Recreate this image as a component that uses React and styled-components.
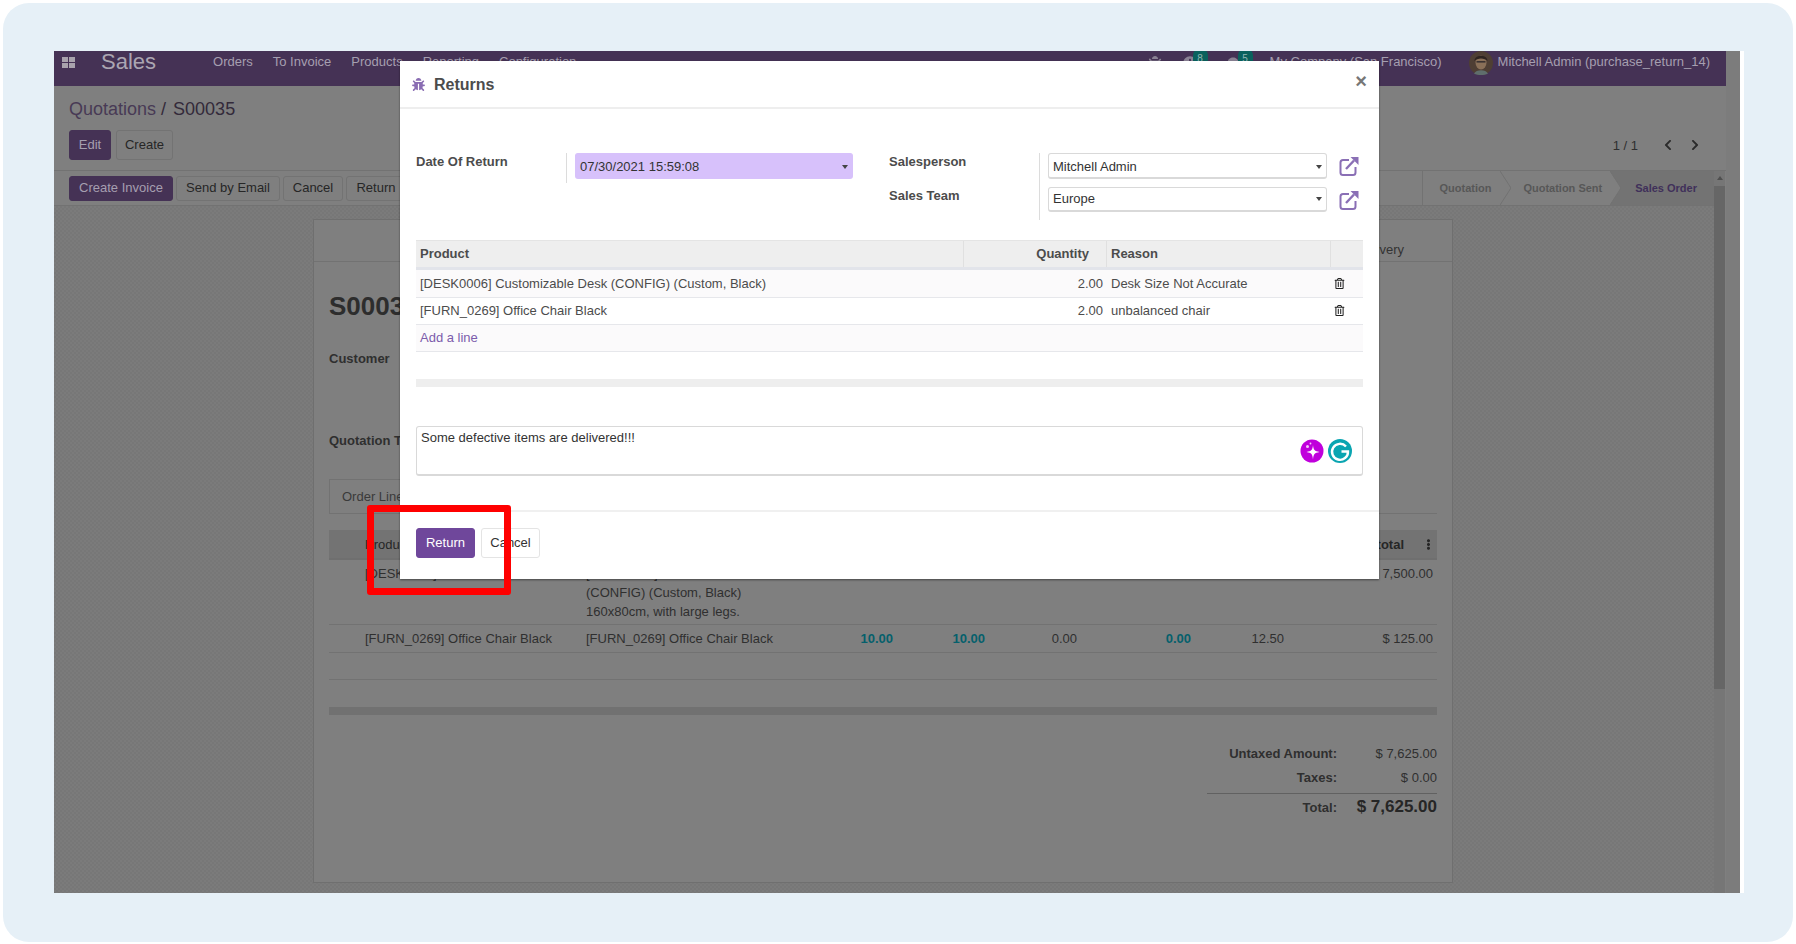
import React from "react";
import styled, { createGlobalStyle } from "styled-components";
import { FaBug, FaChevronLeft, FaChevronRight, FaClock, FaComments, FaEllipsisV, FaRegTrashAlt } from "react-icons/fa";

const GlobalStyle = createGlobalStyle`
  html, body {
    margin: 0;
    padding: 0;
    background: #ffffff;
    font-family: "Liberation Sans", Arial, sans-serif;
    font-size: 13px;
    color: #4c4c4c;
  }
  * {
    box-sizing: border-box;
  }
`;

const Page = styled.div`
  width: 1796px;
  height: 944px;
  padding: 3px;
  overflow: hidden;
`;

const Frame = styled.div`
  height: 939px;
  padding: 48px 49px 0 51px;
  background: #e6f0f7;
  border-radius: 26px;
`;

const Shot = styled.div`
  position: relative;
  width: 1690px;
  height: 842px;
  padding-right: 4px;
  background: #ffffff;
  overflow: hidden;
`;

const Screen = styled.div`
  display: flex;
  height: 100%;
  background: #7f7f7f;
`;

const Main = styled.div`
  display: flex;
  flex-direction: column;
  width: 1672px;
`;

const NavBar = styled.div`
  display: flex;
  flex: none;
  height: 35px;
  padding: 0 16px 0 8px;
  background: #453255;
  color: #a59fb0;
`;

const NavRow = styled.div`
  display: flex;
  align-items: center;
  height: 21px;
  margin-left: ${(p) => (p.$right ? "auto" : "0")};
`;

const AppTitle = styled.span`
  margin: 0 57px 0 25px;
  font-size: 22px;
  color: #aba6b2;
`;

const NavLink = styled.span`
  margin-right: 20px;
`;

const NavIcon = styled.span`
  position: relative;
  display: flex;
  margin-top: 3px;
  margin-right: ${(p) => p.$mr}px;
  font-size: 14px;
  color: #8a8294;
`;

const Badge = styled.span`
  position: absolute;
  left: 10px;
  top: -8px;
  display: flex;
  align-items: center;
  justify-content: center;
  width: 15px;
  height: 20px;
  border-radius: 8px;
  background: #0a615d;
  color: #8fb6b3;
  font-size: 10px;
`;

const AvatarWrap = styled.span`
  display: flex;
  margin: 0 5px 0 27px;
  height: 24px;
  align-self: flex-start;
`;

const ControlPanel = styled.div`
  flex: none;
  height: 85px;
  padding: 12px 12px 0 15px;
  border-bottom: 1px solid #727272;
`;

const Breadcrumb = styled.div`
  font-size: 18px;
  line-height: 22px;
  color: #332a3a;
`;

const BreadcrumbLink = styled.span`
  color: #483a55;
`;

const CurrentCrumb = styled.span`
  margin-left: 2px;
`;

const ActionsRow = styled.div`
  display: flex;
  align-items: center;
  gap: 5px;
  margin-top: 10px;
`;

const Button = styled.span`
  display: inline-flex;
  align-items: center;
  justify-content: center;
  height: ${(p) => p.$h || 30}px;
  width: ${(p) => p.$w}px;
  padding-bottom: 1px;
  border: 1px solid ${(p) => (p.$primary ? "#453255" : "#737373")};
  border-radius: 3px;
  background: ${(p) => (p.$primary ? "#453255" : "#7f7f7f")};
  color: ${(p) => (p.$primary ? "#a59fb0" : "#262626")};
`;

const Pager = styled.div`
  display: flex;
  align-items: center;
  margin-left: auto;
  padding-right: 13px;
  color: #2f2f2f;
  font-size: 13px;
`;

const PagerCount = styled.span`
  margin-right: 24px;
`;

const PagerArrow = styled.span`
  display: flex;
  margin-left: ${(p) => p.$ml || 0}px;
  font-size: 12px;
  color: #2b2b2b;
`;

const ContentRow = styled.div`
  display: flex;
  flex: 1;
  min-height: 0;
`;

const ContentColumn = styled.div`
  display: flex;
  flex-direction: column;
  width: 1660px;
`;

const ScrollBar = styled.div`
  display: flex;
  flex-direction: column;
  align-items: center;
  width: 11px;
  background: #767676;
`;

const ScrollArrow = styled.span`
  margin-top: 5px;
  width: 0;
  height: 0;
  border-left: 3px solid transparent;
  border-right: 3px solid transparent;
  border-bottom: 4px solid #4f4f4f;
`;

const ScrollThumb = styled.span`
  width: 11px;
  height: 503px;
  margin-top: 6px;
  background: #666666;
`;

const StatusBar = styled.div`
  display: flex;
  flex: none;
  align-items: center;
  gap: 3px;
  height: 35px;
  padding-left: 15px;
  border-bottom: 1px solid #727272;
`;

const Steps = styled.div`
  display: flex;
  align-self: stretch;
  margin-left: auto;
  border-left: 1px solid #727272;
  font-size: 11px;
  font-weight: bold;
  color: #575757;
`;

const Step = styled.span`
  display: flex;
  align-items: center;
  padding: ${(p) => p.$pad};
  background: ${(p) => (p.$active ? "#737373" : "transparent")};
  color: ${(p) => (p.$active ? "#40305a" : "#575757")};
`;

const Canvas = styled.div`
  flex: 1;
  min-height: 0;
  padding: 13px 0 10px 259px;
  background: repeating-conic-gradient(#777777 0 25%, #7b7b7b 0 50%) 0 0 / 4px 4px;
`;

const Sheet = styled.div`
  width: 1140px;
  height: 100%;
  padding: 0 15px;
  border: 1px solid #6f6f6f;
  background: #7f7f7f;
`;

const ButtonBox = styled.div`
  display: flex;
  align-items: flex-end;
  justify-content: flex-end;
  height: 42px;
  margin: 0 -15px;
  padding: 0 48px 4px 0;
  border-bottom: 1px solid #727272;
  color: #333333;
`;

const OrderName = styled.h1`
  margin: 29px 0 0;
  font-size: 26px;
  line-height: 30px;
  color: #2d2d2d;
`;

const SheetLabel = styled.div`
  margin-top: ${(p) => p.$mt}px;
  line-height: 20px;
  font-weight: bold;
  color: #2f2f2f;
`;

const Tabs = styled.div`
  margin-top: 28px;
  height: 35px;
  border-bottom: 1px solid #727272;
`;

const Tab = styled.span`
  display: inline-flex;
  align-items: center;
  height: 34px;
  padding: 0 12px;
  border: 1px solid #727272;
  border-bottom: 0;
  color: #3a3a3a;
`;

const lineColumns = "32px 221px 240px 75px 92px 92px 114px 93px 149px";

const LineHead = styled.div`
  display: grid;
  grid-template-columns: ${lineColumns};
  height: 30px;
  margin-top: 16px;
  align-items: center;
  background: #737373;
  border-bottom: 2px solid #6f6f6f;
  color: #262626;
  font-weight: bold;
`;

const LineRow = styled.div`
  display: grid;
  grid-template-columns: ${lineColumns};
  height: ${(p) => p.$h}px;
  padding-top: 4px;
  line-height: 19px;
  border-bottom: ${(p) => (p.$plain ? "0" : "1px solid #727272")};
  color: #2f2f2f;
`;

const LineCell = styled.div`
  padding: 0 4px;
  text-align: ${(p) => (p.$right ? "right" : "left")};
  font-weight: ${(p) => (p.$teal ? "bold" : "normal")};
  color: ${(p) => (p.$teal ? "#05606c" : "inherit")};
`;

const SubtotalCell = styled.div`
  display: flex;
  align-items: center;
  justify-content: flex-end;
  gap: 19px;
  padding: 0 3px 0 4px;
`;

const GreyBar = styled.div`
  height: 8px;
  background: ${(p) => p.$bg};
`;

const Totals = styled.div`
  display: grid;
  grid-template-columns: 130px 100px;
  width: 230px;
  margin: 27px 0 0 auto;
  color: #2f2f2f;
`;

const TotalLabel = styled.div`
  height: 24px;
  line-height: 24px;
  text-align: right;
  font-weight: bold;
`;

const TotalValue = styled.div`
  height: 24px;
  line-height: 24px;
  text-align: right;
`;

const GrandLabel = styled(TotalLabel)`
  margin-top: 3px;
  padding-top: 2px;
  border-top: 1px solid #616161;
  height: 27px;
`;

const GrandValue = styled(TotalValue)`
  margin-top: 3px;
  padding-top: 1px;
  border-top: 1px solid #616161;
  height: 27px;
  font-size: 17px;
  font-weight: bold;
  color: #262626;
`;

const RightGutter = styled.div`
  width: 14px;
  background: #7c7c7c;
`;

const Modal = styled.div`
  position: absolute;
  left: 346px;
  top: 10px;
  display: flex;
  flex-direction: column;
  width: 979px;
  height: 518px;
  background: #ffffff;
  box-shadow: 0 1px 2px rgba(0, 0, 0, 0.45);
`;

const ModalHead = styled.div`
  display: flex;
  flex: none;
  align-items: center;
  height: 48px;
  padding: 1px 12px 0 12px;
  border-bottom: 2px solid #eeeeee;
`;

const ModalTitle = styled.div`
  margin-left: 9px;
  font-size: 16px;
  font-weight: bold;
  color: #4c4c4c;
`;

const CloseMark = styled.span`
  margin-left: auto;
  margin-top: -6px;
  font-size: 20px;
  font-weight: bold;
  color: #777777;
`;

const ModalBody = styled.div`
  flex: 1;
  padding: 44px 16px 0;
`;

const FieldGrid = styled.div`
  display: flex;
  align-items: flex-start;
`;

const FieldGroup = styled.div`
  display: flex;
  width: ${(p) => p.$w}px;
`;

const FieldLabels = styled.div`
  display: flex;
  flex-direction: column;
  gap: 16px;
  width: 150px;
`;

const FieldLabel = styled.div`
  line-height: 18px;
  font-weight: bold;
  color: #4c4c4c;
`;

const FieldValues = styled.div`
  display: flex;
  flex-direction: column;
  gap: 8px;
  padding: 0 0 ${(p) => p.$pb}px 8px;
  border-left: 1px solid #dcdcdc;
`;

const FieldLine = styled.div`
  display: flex;
  align-items: center;
  gap: 12px;
`;

const SelectBox = styled.div`
  display: flex;
  align-items: center;
  justify-content: space-between;
  width: ${(p) => p.$w}px;
  height: ${(p) => p.$h || 26}px;
  padding: ${(p) => (p.$h ? "0 4px 1px" : "2px 4px 0")};
  border: 1px solid ${(p) => (p.$required ? "#d7c1fb" : "#d9d9d9")};
  border-bottom-width: 2px;
  border-radius: 3px;
  background: ${(p) => (p.$required ? "#d7c1fb" : "#ffffff")};
  color: #333333;
`;

const Caret = styled.span`
  width: 0;
  height: 0;
  border-left: 3px solid transparent;
  border-right: 3px solid transparent;
  border-top: 4px solid #444444;
`;

const lineGrid = "548px 143px 224px 32px";

const ReturnHead = styled.div`
  display: grid;
  grid-template-columns: ${lineGrid};
  height: 30px;
  margin-top: 20px;
  background: #eeeeee;
  border-top: 1px solid #e4e4e4;
  border-bottom: 3px solid #e2e4ea;
  font-weight: bold;
  color: #4c4c4c;
`;

const ReturnHeadCell = styled.div`
  display: flex;
  align-items: center;
  justify-content: ${(p) => (p.$right ? "flex-end" : "flex-start")};
  padding: ${(p) => (p.$right ? "0 17px 1px 0" : "0 4px 1px")};
  border-right: 1px solid ${(p) => (p.$last ? "transparent" : "#e0e0e0")};
`;

const ReturnRow = styled.div`
  display: grid;
  grid-template-columns: ${lineGrid};
  align-items: center;
  height: ${(p) => p.$h || 27}px;
  padding-bottom: 1px;
  background: ${(p) => (p.$striped ? "#fbfafb" : "#ffffff")};
  border-bottom: 1px solid #e6e7eb;
  color: #4c4c4c;
`;

const ReturnCell = styled.div`
  display: flex;
  justify-content: ${(p) => (p.$right ? "flex-end" : "flex-start")};
  padding: 0 4px;
`;

const TrashCell = styled(ReturnCell)`
  padding: 0 3px;
  color: #222222;
`;

const AddLine = styled.span`
  padding-left: 4px;
  color: #7c5cab;
`;

const LightBar = styled(GreyBar)`
  margin-top: 27px;
`;

const Notes = styled.div`
  position: relative;
  height: 50px;
  margin-top: 39px;
  padding: 3px 4px;
  border: 1px solid #d9d9d9;
  border-bottom-width: 2px;
  border-radius: 3px;
  color: #333333;
`;

const NoteTools = styled.div`
  position: absolute;
  right: 10px;
  bottom: 11px;
  display: flex;
  gap: 4px;
`;

const ModalFoot = styled.div`
  display: flex;
  flex: none;
  gap: 6px;
  height: 69px;
  padding: 16px 16px 0;
  border-top: 2px solid #f0f0f0;
`;

const FootButton = styled.span`
  display: inline-flex;
  align-items: center;
  justify-content: center;
  width: 59px;
  height: 30px;
  padding-bottom: 1px;
  border: 1px solid ${(p) => (p.$primary ? "#6f479b" : "#e4e4e4")};
  border-radius: 3px;
  background: ${(p) => (p.$primary ? "#6f479b" : "#ffffff")};
  color: ${(p) => (p.$primary ? "#ffffff" : "#333333")};
`;

const Highlight = styled.div`
  position: absolute;
  left: 313px;
  top: 454px;
  width: 144px;
  height: 90px;
  border: 7px solid #ff0000;
  border-radius: 3px;
`;

function AppsGrid() {
  return (
    <svg width="14" height="22" viewBox="0 0 14 22">
      <g fill="#a9a3ad">
        <rect x="0" y="6" width="6" height="5" />
        <rect x="7" y="6" width="6" height="5" />
        <rect x="0" y="12" width="6" height="5" />
        <rect x="7" y="12" width="6" height="5" />
      </g>
    </svg>
  );
}

function Avatar() {
  return (
    <svg width="24" height="24" viewBox="0 0 24 24">
      <circle cx="12" cy="12" r="12" fill="#4f3f34" />
      <ellipse cx="12" cy="11.5" rx="5.5" ry="7" fill="#8a7058" />
      <path d="M5.5 10C5.5 3 18.5 3 18.5 10C16 6.5 8 6.5 5.5 10Z" fill="#2e2420" />
      <rect x="7.5" y="10" width="9" height="1.6" fill="#3a3230" />
      <path d="M5 22.5C7 18 17 18 19 22.5C15 24.5 9 24.5 5 22.5Z" fill="#5f6e6c" />
    </svg>
  );
}

function ExternalLink() {
  return (
    <svg width="20" height="20" viewBox="0 0 20 20" fill="none">
      <path
        d="M10 4H4a2.5 2.5 0 0 0-2.5 2.5v10A2.5 2.5 0 0 0 4 19h10a2.5 2.5 0 0 0 2.5-2.5V11"
        stroke="#8a6fb5"
        strokeWidth="2"
      />
      <path d="M7 13L15 4.5" stroke="#8a6fb5" strokeWidth="2.4" />
      <path d="M11.5 1H19.5V9Z" fill="#8a6fb5" />
    </svg>
  );
}

function SparkleBadge() {
  return (
    <svg width="24" height="24" viewBox="0 0 24 24">
      <circle cx="12" cy="12" r="11.5" fill="#c000dc" />
      <path d="M13 6C13.5 11 14.5 12 19.5 13C14.5 14 13.5 15 13 20.5C12.5 15 11.5 14 6.5 13C11.5 12 12.5 11 13 6Z" fill="#ffffff" />
      <circle cx="7.5" cy="7.5" r="1.5" fill="#f4c8fa" />
      <circle cx="10.5" cy="4.5" r="0.9" fill="#f4c8fa" />
    </svg>
  );
}

function GrammarlyBadge() {
  return (
    <svg width="24" height="24" viewBox="0 0 24 24" fill="none">
      <circle cx="12" cy="12" r="12" fill="#0aa5b1" />
      <path d="M18 7.5A8 8 0 1 0 20 12.5H13.5" stroke="#ffffff" strokeWidth="2.4" />
    </svg>
  );
}

function StepChevron({ filled }) {
  return (
    <svg width="11" height="34" viewBox="0 0 11 34" style={{ flex: "none", background: filled ? "#737373" : "transparent" }}>
      <path d="M0 0L11 17L0 34" fill="#7f7f7f" stroke="#727272" />
    </svg>
  );
}

const orderLines = [
  {
    code: "[FURN_0269] Office Chair Black",
    desc: ["[FURN_0269] Office Chair Black"],
    price: "12.50",
    total: "$ 125.00",
  },
];

export default function App() {
  return (
    <Page>
      <GlobalStyle />
      <Frame>
        <Shot>
          <Screen>
            <Main>
              <NavBar>
                <NavRow>
                  <AppsGrid />
                  <AppTitle>Sales</AppTitle>
                  <NavLink>Orders</NavLink>
                  <NavLink>To Invoice</NavLink>
                  <NavLink>Products</NavLink>
                  <NavLink>Reporting</NavLink>
                  <NavLink>Configuration</NavLink>
                </NavRow>
                <NavRow $right>
                  <NavIcon $mr={21}>
                    <FaBug />
                  </NavIcon>
                  <NavIcon $mr={31}>
                    <FaClock />
                    <Badge>8</Badge>
                  </NavIcon>
                  <NavIcon $mr={28}>
                    <FaComments />
                    <Badge>5</Badge>
                  </NavIcon>
                  <span>My Company (San Francisco)</span>
                  <AvatarWrap>
                    <Avatar />
                  </AvatarWrap>
                  <span>Mitchell Admin (purchase_return_14)</span>
                </NavRow>
              </NavBar>

              <ControlPanel>
                <Breadcrumb>
                  <BreadcrumbLink>Quotations</BreadcrumbLink> / <CurrentCrumb>S00035</CurrentCrumb>
                </Breadcrumb>
                <ActionsRow>
                  <Button $primary $w={42}>Edit</Button>
                  <Button $w={57}>Create</Button>
                  <Pager>
                    <PagerCount>1 / 1</PagerCount>
                    <PagerArrow><FaChevronLeft /></PagerArrow>
                    <PagerArrow $ml={15}><FaChevronRight /></PagerArrow>
                  </Pager>
                </ActionsRow>
              </ControlPanel>

              <ContentRow>
                <ContentColumn>
                  <StatusBar>
                    <Button $primary $h={25} $w={104}>Create Invoice</Button>
                    <Button $h={25} $w={104}>Send by Email</Button>
                    <Button $h={25} $w={60}>Cancel</Button>
                    <Button $h={25} $w={60}>Return</Button>
                    <Steps>
                      <Step $pad="0 9px 0 16px">Quotation</Step>
                      <StepChevron />
                      <Step $pad="0 8px 0 12px">Quotation Sent</Step>
                      <StepChevron filled />
                      <Step $active $pad="0 17px 0 14px">Sales Order</Step>
                    </Steps>
                  </StatusBar>

                  <Canvas>
                    <Sheet>
                      <ButtonBox>Delivery</ButtonBox>
                      <OrderName>S00035</OrderName>
                      <SheetLabel $mt={28}>Customer</SheetLabel>
                      <SheetLabel $mt={62}>Quotation Template</SheetLabel>
                      <Tabs>
                        <Tab>Order Lines</Tab>
                      </Tabs>
                      <LineHead>
                        <LineCell />
                        <LineCell>Product</LineCell>
                        <LineCell>Description</LineCell>
                        <LineCell $right>Ordered</LineCell>
                        <LineCell $right>Delivered</LineCell>
                        <LineCell $right>Invoiced</LineCell>
                        <LineCell $right>Returned</LineCell>
                        <LineCell $right>Unit Price</LineCell>
                        <SubtotalCell>
                          Subtotal
                          <FaEllipsisV size={11} />
                        </SubtotalCell>
                      </LineHead>
                      <LineRow $h={65}>
                        <LineCell />
                        <LineCell>[DESK0006] Customizable Desk</LineCell>
                        <LineCell>
                          [DESK0006] Customizable Desk
                          <br />
                          (CONFIG) (Custom, Black)
                          <br />
                          160x80cm, with large legs.
                        </LineCell>
                        <LineCell $right $teal>10.00</LineCell>
                        <LineCell $right $teal>10.00</LineCell>
                        <LineCell $right>0.00</LineCell>
                        <LineCell $right $teal>0.00</LineCell>
                        <LineCell $right>750.00</LineCell>
                        <LineCell $right>$ 7,500.00</LineCell>
                      </LineRow>
                      {orderLines.map((line) => (
                        <LineRow key={line.code} $h={28}>
                          <LineCell />
                          <LineCell>{line.code}</LineCell>
                          <LineCell>{line.desc}</LineCell>
                          <LineCell $right $teal>10.00</LineCell>
                          <LineCell $right $teal>10.00</LineCell>
                          <LineCell $right>0.00</LineCell>
                          <LineCell $right $teal>0.00</LineCell>
                          <LineCell $right>{line.price}</LineCell>
                          <LineCell $right>{line.total}</LineCell>
                        </LineRow>
                      ))}
                      <LineRow $h={27} />
                      <LineRow $h={27} $plain />
                      <GreyBar $bg="#717171" />
                      <Totals>
                        <TotalLabel>Untaxed Amount:</TotalLabel>
                        <TotalValue>$ 7,625.00</TotalValue>
                        <TotalLabel>Taxes:</TotalLabel>
                        <TotalValue>$ 0.00</TotalValue>
                        <GrandLabel>Total:</GrandLabel>
                        <GrandValue>$ 7,625.00</GrandValue>
                      </Totals>
                    </Sheet>
                  </Canvas>
                </ContentColumn>
                <ScrollBar>
                  <ScrollArrow />
                  <ScrollThumb />
                </ScrollBar>
              </ContentRow>
            </Main>
            <RightGutter />
          </Screen>

          <Modal>
            <ModalHead>
              <FaBug color="#8a6db3" size={13} />
              <ModalTitle>Returns</ModalTitle>
              <CloseMark>×</CloseMark>
            </ModalHead>
            <ModalBody>
              <FieldGrid>
                <FieldGroup $w={473}>
                  <FieldLabels>
                    <FieldLabel>Date Of Return</FieldLabel>
                  </FieldLabels>
                  <FieldValues $pb={4}>
                    <SelectBox $required $w={278}>
                      07/30/2021 15:59:08
                      <Caret />
                    </SelectBox>
                  </FieldValues>
                </FieldGroup>
                <FieldGroup $w={474}>
                  <FieldLabels>
                    <FieldLabel>Salesperson</FieldLabel>
                    <FieldLabel>Sales Team</FieldLabel>
                  </FieldLabels>
                  <FieldValues $pb={8}>
                    <FieldLine>
                      <SelectBox $w={279}>
                        Mitchell Admin
                        <Caret />
                      </SelectBox>
                      <ExternalLink />
                    </FieldLine>
                    <FieldLine>
                      <SelectBox $w={279} $h={25}>
                        Europe
                        <Caret />
                      </SelectBox>
                      <ExternalLink />
                    </FieldLine>
                  </FieldValues>
                </FieldGroup>
              </FieldGrid>

              <ReturnHead>
                <ReturnHeadCell>Product</ReturnHeadCell>
                <ReturnHeadCell $right>Quantity</ReturnHeadCell>
                <ReturnHeadCell>Reason</ReturnHeadCell>
                <ReturnHeadCell $last />
              </ReturnHead>
              <ReturnRow $h={28} $striped>
                <ReturnCell>[DESK0006] Customizable Desk (CONFIG) (Custom, Black)</ReturnCell>
                <ReturnCell $right>2.00</ReturnCell>
                <ReturnCell>Desk Size Not Accurate</ReturnCell>
                <TrashCell><FaRegTrashAlt size={11} /></TrashCell>
              </ReturnRow>
              <ReturnRow>
                <ReturnCell>[FURN_0269] Office Chair Black</ReturnCell>
                <ReturnCell $right>2.00</ReturnCell>
                <ReturnCell>unbalanced chair</ReturnCell>
                <TrashCell><FaRegTrashAlt size={11} /></TrashCell>
              </ReturnRow>
              <ReturnRow $striped>
                <AddLine>Add a line</AddLine>
              </ReturnRow>
              <LightBar $bg="#eeeeee" />

              <Notes>
                Some defective items are delivered!!!
                <NoteTools>
                  <SparkleBadge />
                  <GrammarlyBadge />
                </NoteTools>
              </Notes>
            </ModalBody>
            <ModalFoot>
              <FootButton $primary>Return</FootButton>
              <FootButton>Cancel</FootButton>
            </ModalFoot>
          </Modal>

          <Highlight />
        </Shot>
      </Frame>
    </Page>
  );
}
